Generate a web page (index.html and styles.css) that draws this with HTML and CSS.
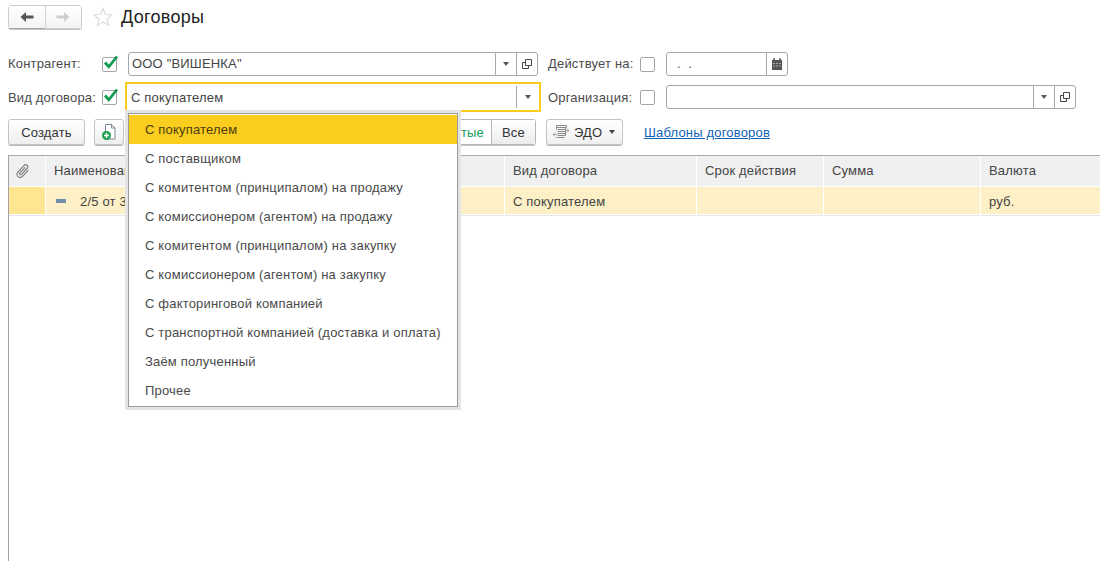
FILE: index.html
```html
<!DOCTYPE html>
<html lang="ru">

<head>
    <meta charset="UTF-8">
    <title>Договоры</title>

    <link rel="stylesheet" href="styles.css">
</head>

<body>
    <header class="title-row">
        <div class="nav-group">
            <button class="nav-btn nav-back">
                <svg width="16" height="12" viewBox="0 0 16 12"><path d="M7 1 1.500 6 7 11V7.600h7.500V4.400H7z" fill="#555"/></svg>
            </button>
            <button class="nav-btn">
                <svg width="16" height="12" viewBox="0 0 16 12"><path d="M9 1l5.500 5L9 11V7.600H1.500V4.400H9z" fill="#cfcfcf"/></svg>
            </button>
        </div>
        <svg class="star" width="20" height="20" viewBox="0 0 20 20"><path d="M10 1.500l2.500 5.800 6.300.6-4.800 4.100 1.500 6.200-5.500-3.300-5.500 3.300 1.500-6.200L1.200 7.900l6.300-.6z" fill="none" stroke="#dcdcdc" stroke-width="1.200"/></svg>
        <h1>Договоры</h1>
    </header>

    <section class="filters">
        <div class="filter-row">
            <label class="lbl lbl-first">Контрагент:</label>
            <span class="check"><svg width="18" height="16" viewBox="0 0 18 16"><path d="M3 7.500l3.800 4.300L15 1.500" fill="none" stroke="#149a50" stroke-width="2.800"/></svg></span>
            <div class="field field-partner">
                <span class="field-text">ООО "ВИШЕНКА"</span>
                <span class="field-btn"><i class="arrow"></i></span>
                <span class="field-btn">
                    <svg width="10" height="10" viewBox="0 0 10 10"><path d="M3.500.5h6v6h-6zM3.500 3.500h-3v6h6v-3" fill="none" stroke="#444"/></svg>
                </span>
            </div>
            <label class="lbl lbl-right">Действует на:</label>
            <span class="check"></span>
            <div class="field field-date">
                <span class="field-text date-text">. .</span>
                <span class="field-btn">
                    <svg width="12" height="12" viewBox="0 0 12 12"><path d="M1 2h10v10H1z" fill="#555"/><path d="M3 0v3M9 0v3" stroke="#555" stroke-width="1.500"/><path d="M2.500 5h1v1h-1zM5.500 5h1v1h-1zM8.500 5h1v1h-1zM2.500 7.500h1v1h-1zM5.500 7.500h1v1h-1zM8.500 7.500h1v1h-1z" fill="#fff"/></svg>
                </span>
            </div>
        </div>

        <div class="filter-row filter-row-tall">
            <label class="lbl lbl-first">Вид договора:</label>
            <span class="check"><svg width="18" height="16" viewBox="0 0 18 16"><path d="M3 7.500l3.800 4.300L15 1.500" fill="none" stroke="#149a50" stroke-width="2.800"/></svg></span>
            <div class="field field-kind">
                <span class="field-text">С покупателем</span>
                <span class="field-btn"><i class="arrow"></i></span>
            </div>
            <label class="lbl lbl-right">Организация:</label>
            <span class="check"></span>
            <div class="field field-org">
                <span class="field-text"></span>
                <span class="field-btn"><i class="arrow"></i></span>
                <span class="field-btn">
                    <svg width="10" height="10" viewBox="0 0 10 10"><path d="M3.500.5h6v6h-6zM3.500 3.500h-3v6h6v-3" fill="none" stroke="#444"/></svg>
                </span>
            </div>
        </div>
    </section>

    <section class="toolbar">
        <button class="btn btn-create">Создать</button>
        <button class="btn btn-icon">
            <svg width="16" height="18" viewBox="0 0 16 18">
                <path d="M4.500 1.500h6l3.500 3.500v11H4.500z" fill="#fff" stroke="#7d8a99"/>
                <path d="M10.500 1.500V5H14" fill="none" stroke="#7d8a99"/>
                <circle cx="5.500" cy="12.500" r="4.500" fill="#1da04f"/>
                <path d="M3 12.500h5M5.500 10v5" stroke="#fff" stroke-width="1.400"/>
            </svg>
        </button>
        <div class="segment">
            <button class="seg-btn seg-green">Открытые</button>
            <button class="seg-btn seg-all">Все</button>
        </div>
        <button class="btn btn-edo">
            <svg width="16" height="16" viewBox="0 0 16 16" fill="none" stroke="#8a8a8a">
                <path d="M3.500 1.500h10v2h-10zM4.500 5.500h8M4.500 7.500h8M4.500 9.500h8M4.500 11.500h8M3.500 13.500h8" />
                <path d="M3.500 3.500v2M12.500 3.500v8"/>
                <path d="M0 10.500h4M2 8.500l-2 2 2 2M12 6.500h4M14 4.500l2 2-2 2" stroke="#a0a0a0"/>
            </svg>
            ЭДО
            <i class="arrow arrow-edo"></i>
        </button>
        <a class="link" href="#">Шаблоны договоров</a>
    </section>

    <section class="grid">
        <div class="cell head head-clip">
            <svg width="14" height="16" viewBox="0 0 14 16"><path d="M12.500 7l-5.700 6.200c-1.500 1.600-3.600 1.700-4.900.5s-1.200-3.200.2-4.700L8 2.600c1-1 2.400-1.100 3.300-.3s.8 2.200-.2 3.200L5.600 11.300c-.5.500-1.200.6-1.600.2s-.4-1.100.1-1.600L9.300 4.400" fill="none" stroke="#7b7b7b" stroke-width="1.100"/></svg>
        </div>
        <div class="cell head">Наименование</div>
        <div class="cell head">Вид договора</div>
        <div class="cell head">Срок действия</div>
        <div class="cell head">Сумма</div>
        <div class="cell head">Валюта</div>

        <div class="cell row row-mark"></div>
        <div class="cell row"><i class="minus"></i>2/5 от 3</div>
        <div class="cell row">С покупателем</div>
        <div class="cell row"></div>
        <div class="cell row"></div>
        <div class="cell row">руб.</div>
    </section>

    <ul class="dropdown">
        <li class="selected">С покупателем</li>
        <li>С поставщиком</li>
        <li>С комитентом (принципалом) на продажу</li>
        <li>С комиссионером (агентом) на продажу</li>
        <li>С комитентом (принципалом) на закупку</li>
        <li>С комиссионером (агентом) на закупку</li>
        <li>С факторинговой компанией</li>
        <li>С транспортной компанией (доставка и оплата)</li>
        <li>Заём полученный</li>
        <li>Прочее</li>
    </ul>
</body></html>
```

FILE: styles.css
```css
* {
    box-sizing: border-box;
}

html,
body {
    height: 100%;
}

body {
    margin: 0;
    overflow: hidden;
    background: #fff;
    color: #4a4a4a;
    font-family: "Liberation Sans", Arial, sans-serif;
    font-size: 13px;
    letter-spacing: 0.18px;
}

button {
    font-family: inherit;
    font-size: 13px;
    letter-spacing: inherit;
    color: #333;
    padding: 0;
}

.title-row {
    display: flex;
    align-items: center;
    height: 24px;
    margin: 5px 0 0 8px;
}

.nav-group {
    display: flex;
    width: 74px;
    height: 24px;
    border: 1px solid #cdcdcd;
    border-radius: 3px;
    box-shadow: 0 1px 0 #c4c4c4;
}

.nav-btn {
    flex: 1;
    border: 0;
    background: linear-gradient(#fff, #f3f3f3);
    display: flex;
    align-items: center;
    justify-content: center;
}

.nav-back {
    box-shadow: 0 1px 0 #a8a8a8, 1px 0 0 #b5b5b5;
}

.nav-btn + .nav-btn {
    border-left: 1px solid #d4d4d4;
}

.star {
    margin-left: 11px;
}

h1 {
    margin: 0 0 0 8px;
    font-size: 18px;
    font-weight: normal;
    letter-spacing: 0.3px;
    color: #222;
}

.filters {
    margin: 23px 0 0 8px;
}

.filter-row {
    display: flex;
    align-items: center;
    height: 24px;
}

.filter-row-tall {
    height: 30px;
    margin-top: 6px;
}

.lbl-first {
    width: 94px;
}

.lbl-right {
    width: 92px;
    margin-left: 10px;
}

.filter-row .lbl {
    padding-bottom: 2px;
}

.filter-row-tall .lbl {
    padding-bottom: 0;
}

.filter-row-tall .lbl-right {
    margin-left: 7px;
}

.check {
    display: block;
    width: 15px;
    height: 15px;
    border: 1px solid #a5a5a5;
    border-radius: 2px;
    background: #fff;
}

.check svg {
    display: block;
    margin: -3px 0 0 -1px;
}

.field {
    display: flex;
    height: 24px;
    border: 1px solid #a8a8a8;
    border-radius: 3px;
    background: #fff;
    margin-left: 11px;
}

.field-partner {
    width: 410px;
}

.field-date {
    width: 122px;
}

.field-kind {
    width: 416px;
    height: 30px;
    margin-left: 8px;
    border: 2px solid #fbcb1c;
    border-radius: 0;
    padding: 2px 0;
}

.field-org {
    width: 410px;
}

.field-text {
    flex: 1;
    line-height: 22px;
    padding-left: 3px;
    color: #444;
}

.field-kind .field-text {
    padding: 1px 0 0 4px;
}

.date-text {
    padding-left: 10px;
    letter-spacing: 2px;
}

.field-btn {
    width: 21px;
    border-left: 1px solid #a8a8a8;
    display: flex;
    align-items: center;
    justify-content: center;
}

.field-kind .field-btn {
    width: 23px;
}

.arrow {
    display: block;
    width: 0;
    height: 0;
    border-left: 3.500px solid transparent;
    border-right: 3.500px solid transparent;
    border-top: 4px solid #555;
}

.toolbar {
    display: flex;
    align-items: center;
    height: 26px;
    margin: 7px 0 0 8px;
}

.btn {
    height: 26px;
    border: 1px solid #c4c4c4;
    border-radius: 3px;
    background: linear-gradient(#fff, #efefef);
    box-shadow: 0 1px 0 #b5b5b5;
}

.btn-create {
    width: 77px;
}

.btn-icon {
    width: 30px;
    margin-left: 9px;
    display: flex;
    align-items: center;
    justify-content: center;
}

.segment {
    display: flex;
    width: 406px;
    height: 26px;
    margin-left: 6px;
    border: 1px solid #b8b8b8;
    border-radius: 3px;
    box-shadow: 0 1px 0 #c4c4c4;
}

.seg-btn {
    border: 0;
    background: #fff;
}

.seg-green {
    flex: 1;
    padding-right: 7px;
    text-align: right;
    color: #14a05a;
}

.seg-all {
    width: 44px;
    border-left: 1px solid #b8b8b8;
    background: linear-gradient(#fff, #ececec);
}

.btn-edo {
    display: flex;
    align-items: center;
    width: 77px;
    margin-left: 10px;
    padding-left: 6px;
    gap: 5px;
}

.arrow-edo {
    margin-left: 2px;
    border-top-color: #444;
}

.link {
    margin-left: 21px;
    color: #0f62b8;
}

.grid {
    display: grid;
    grid-template-columns: 36px 458px 191px 126px 156px 119px;
    grid-template-rows: 30px 27px;
    column-gap: 1px;
    row-gap: 1px;
    align-content: start;
    height: 406px;
    margin: 10px 0 0 8px;
    border-left: 1px solid #a3a3a3;
    border-top: 1px solid #ababab;
}

.grid::after {
    content: "";
    grid-column: 1 / -1;
    height: 1px;
    background: #e6e6e6;
}

.cell {
    display: flex;
    align-items: center;
    padding-left: 8px;
    color: #444;
}

.head {
    background: #f0f0f0;
    padding-bottom: 2px;
}

.head-clip {
    padding: 0 0 0 7px;
}

.row {
    background: #fdf0c6;
    padding-top: 2px;
}

.row-mark {
    background: #fde592;
}

.minus {
    display: block;
    width: 10px;
    height: 4px;
    margin: 0 14px 2px 2px;
    background: #6f8fb0;
}

.dropdown {
    position: absolute;
    top: 113px;
    left: 128px;
    width: 330px;
    margin: 0;
    padding: 1px 0 1px;
    list-style: none;
    background: #fff;
    border: 1px solid #9a9a9a;
    box-shadow: 0 0 0 3px #e4e4e4;
}

.dropdown li {
    height: 29px;
    line-height: 29px;
    padding-left: 16px;
    color: #4a4a4a;
}

.dropdown .selected {
    background: #fbcd1e;
    color: #4a3c10;
}
```
